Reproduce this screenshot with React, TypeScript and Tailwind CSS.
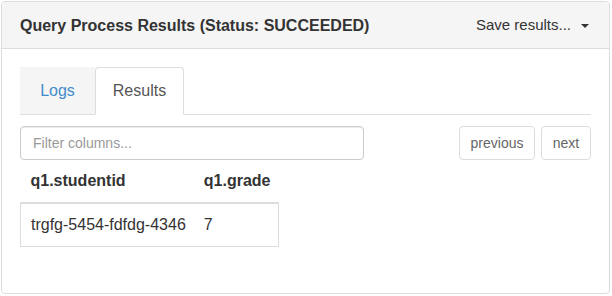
import React from 'react';

const font = { fontFamily: '"Liberation Sans", Arial, sans-serif' };

const App: React.FC = () => {
  return (
    <div className="w-[612px] h-[296px] bg-white p-px" style={font}>
      <div className="w-[609px] h-[293px] border border-[#ddd] rounded-[4px] flex flex-col">
        <div className="h-[47px] shrink-0 bg-[#f5f5f5] border-b border-[#ddd] rounded-t-[3px] flex items-center justify-between pl-[18px] pr-[20px]">
          <h3 className="text-[16px] font-bold text-[#333] pt-px">Query Process Results (Status: SUCCEEDED)</h3>
          <button className="flex items-center gap-[10px] text-[15px] text-[#333] pt-px">
            Save results...
            <span className="w-0 h-0 border-l-[4px] border-r-[4px] border-t-[4px] border-l-transparent border-r-transparent border-t-[#333]" />
          </button>
        </div>

        <div className="px-[18px] pt-[18px] flex flex-col">
          <div className="flex h-[48px] border-b border-[#ddd]">
            <div className="w-[75px] h-[47px] bg-[#f5f5f5] flex items-center justify-center text-[16px] text-[#428bca]">Logs</div>
            <div className="w-[89px] h-[48px] -mb-px bg-white border border-[#ddd] border-b-white rounded-t-[4px] flex items-center justify-center text-[16px] text-[#555]">
              Results
            </div>
          </div>

          <div className="flex items-center justify-between mt-[11px]">
            <input
              className="w-[344px] h-[34px] border border-[#ccc] rounded-[4px] px-[12px] text-[14px] text-[#555] placeholder:text-[#999] shadow-[inset_0_1px_1px_rgba(0,0,0,0.075)] outline-none"
              placeholder="Filter columns..."
              style={font}
            />
            <div className="flex gap-[6px]">
              <button className="w-[76px] h-[34px] border border-[#ddd] rounded-[4px] text-[14px] text-[#666]">previous</button>
              <button className="w-[50px] h-[34px] border border-[#ddd] rounded-[4px] text-[14px] text-[#666]">next</button>
            </div>
          </div>

          <table className="self-start border-collapse text-[16px] text-[#333] whitespace-nowrap">
            <thead>
              <tr className="h-[43px]">
                <th className="text-left font-bold pl-[10px] pr-[10px] align-middle border-b-2 border-[#ddd]">q1.studentid</th>
                <th className="text-left font-bold pl-[8px] pr-[8px] align-middle border-b-2 border-[#ddd]">q1.grade</th>
              </tr>
            </thead>
            <tbody>
              <tr className="h-[43px]">
                <td className="pl-[10px] pr-[10px] border-l border-b border-[#ddd]">trgfg-5454-fdfdg-4346</td>
                <td className="pl-[8px] pr-[8px] border-r border-b border-[#ddd]">7</td>
              </tr>
            </tbody>
          </table>
        </div>
      </div>
    </div>
  );
};

export default App;
